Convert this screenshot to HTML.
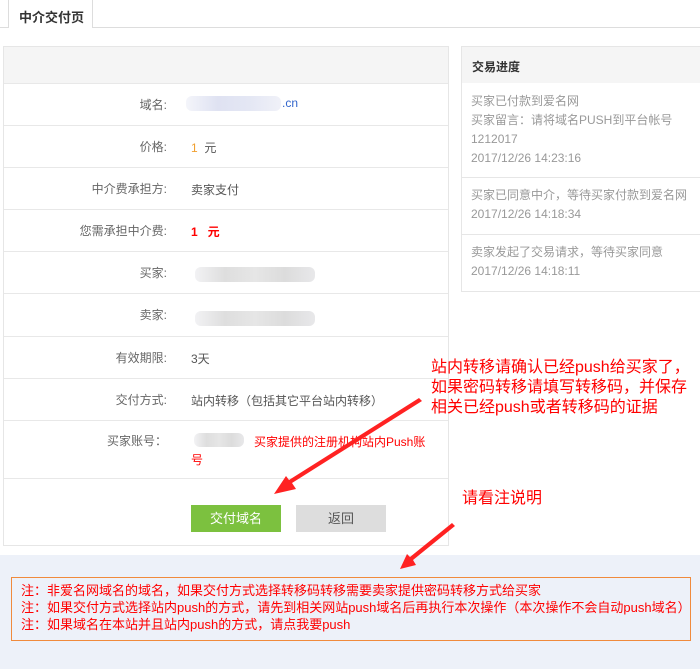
<!DOCTYPE html>
<html><head><meta charset="utf-8"><style>
*{margin:0;padding:0;box-sizing:border-box}
body{width:700px;height:669px;background:#fff;position:relative;overflow:hidden;font-family:"Liberation Sans","Noto Sans CJK SC",sans-serif;font-size:12px;color:#555}
.a{position:absolute}
.tabline{left:0;top:27px;width:700px;height:1px;background:#ddd}
.tab{left:8px;top:0;width:85px;height:28px;border:1px solid #ddd;border-top:none;border-bottom:none;background:#fff;font-weight:bold;color:#333;font-size:13px;padding:7px 0 0 10px}
.box{left:3px;top:46px;width:446px;height:500px;border:1px solid #e6e6e6}
.hd{left:4px;top:47px;width:444px;height:36px;background:#f5f5f5}
.row{left:4px;width:444px;height:1px;background:#e8e8e8}
.lb{width:167px;text-align:right;font-size:12px;color:#666}
.v{left:191px;font-size:12px;color:#555}
.blur{background:linear-gradient(90deg,#f2f2f4,#dedede,#e6e6e6,#dcdcdc,#e8e8ea);border-radius:6px;height:15px}
.btn{top:505px;width:90px;height:27px;text-align:center;line-height:27px;font-size:13px}
.rp{left:461px;top:46px;width:245px;height:246px;border:1px solid #e6e6e6}
.rh{left:462px;top:47px;width:240px;height:36px;background:#f5f5f5;font-weight:bold;color:#333;font-size:12px;padding:11px 0 0 10px}
.rt{left:471px;color:#999;font-size:12px;line-height:19px}
.red{color:#f00}
.ann{color:#f00;font-size:16px;line-height:20px}
.bot{left:0;top:555px;width:700px;height:114px;background:#edf1f9}
.nb{left:11px;top:577px;width:680px;height:64px;border:1px solid #f08a3c;padding:4px 0 0 9px;color:#f00;font-size:13px;line-height:17px;white-space:nowrap}
</style></head><body>
<div class="a tabline"></div>
<div class="a tab">中介交付页</div>
<div class="a box"></div>
<div class="a hd"></div>
<div class="a row" style="top:83px"></div>
<div class="a row" style="top:125px"></div>
<div class="a row" style="top:167px"></div>
<div class="a row" style="top:209px"></div>
<div class="a row" style="top:251px"></div>
<div class="a row" style="top:293px"></div>
<div class="a row" style="top:336px"></div>
<div class="a row" style="top:378px"></div>
<div class="a row" style="top:420px"></div>
<div class="a row" style="top:478px"></div>

<div class="a lb" style="top:96px">域名:</div>
<div class="a blur" style="left:186px;top:96px;width:95px;background:linear-gradient(90deg,#f4f5fa,#dfe2f2,#e4e7f4,#f0f1f8)"></div>
<div class="a v" style="left:282px;top:96px;color:#36c">.cn</div>
<div class="a lb" style="top:138px">价格:</div>
<div class="a v" style="top:139px"><span style="color:#f0a030">1</span>&nbsp; 元</div>
<div class="a lb" style="top:180px">中介费承担方:</div>
<div class="a v" style="top:181px">卖家支付</div>
<div class="a lb" style="top:222px">您需承担中介费:</div>
<div class="a v red" style="top:223px;font-weight:bold">1 &nbsp; 元</div>
<div class="a lb" style="top:264px">买家:</div>
<div class="a blur" style="left:195px;top:267px;width:120px"></div>
<div class="a lb" style="top:306px">卖家:</div>
<div class="a blur" style="left:195px;top:311px;width:120px"></div>
<div class="a lb" style="top:349px">有效期限:</div>
<div class="a v" style="top:350px">3天</div>
<div class="a lb" style="top:391px">交付方式:</div>
<div class="a v" style="top:392px">站内转移（包括其它平台站内转移）</div>
<div class="a lb" style="top:432px">买家账号：</div>
<div class="a blur" style="left:194px;top:433px;width:50px;height:14px"></div>
<div class="a red" style="left:254px;top:434px;font-size:12px;width:190px;line-height:17px">买家提供的注册机构站内Push账</div>
<div class="a red" style="left:191px;top:451px;font-size:12px">号</div>

<div class="a btn" style="left:191px;background:#7cc13f;color:#fff">交付域名</div>
<div class="a btn" style="left:296px;background:#ddd;color:#555">返回</div>

<div class="a rp"></div>
<div class="a rh">交易进度</div>
<div class="a rt" style="top:92px">买家已付款到爱名网<br>买家留言：请将域名PUSH到平台帐号<br>1212017<br>2017/12/26 14:23:16</div>
<div class="a" style="left:462px;top:177px;width:240px;height:1px;background:#e6e6e6"></div>
<div class="a rt" style="top:186px">买家已同意中介，等待买家付款到爱名网<br>2017/12/26 14:18:34</div>
<div class="a" style="left:462px;top:234px;width:240px;height:1px;background:#e6e6e6"></div>
<div class="a rt" style="top:243px">卖家发起了交易请求，等待买家同意<br>2017/12/26 14:18:11</div>

<div class="a bot"></div>
<div class="a nb">注：非爱名网域名的域名，如果交付方式选择转移码转移需要卖家提供密码转移方式给买家<br>注：如果交付方式选择站内push的方式，请先到相关网站push域名后再执行本次操作（本次操作不会自动push域名）<br>注：如果域名在本站并且站内push的方式，请点我要push</div>

<div class="a ann" style="left:431px;top:358px;white-space:nowrap">站内转移请确认已经push给买家了，<br>如果密码转移请填写转移码，并保存<br>相关已经push或者转移码的证据</div>
<div class="a ann" style="left:462px;top:489px">请看注说明</div>

<svg class="a" style="left:0;top:0" width="700" height="669">
<polygon points="419,398 422,401 292,483 296,489 274,494 286,476 289,480" fill="#f22"/>
<polygon points="452,523 455,526 413,560 416,565 400,569 407,554 410,557" fill="#f22"/>
</svg>
</body></html>
